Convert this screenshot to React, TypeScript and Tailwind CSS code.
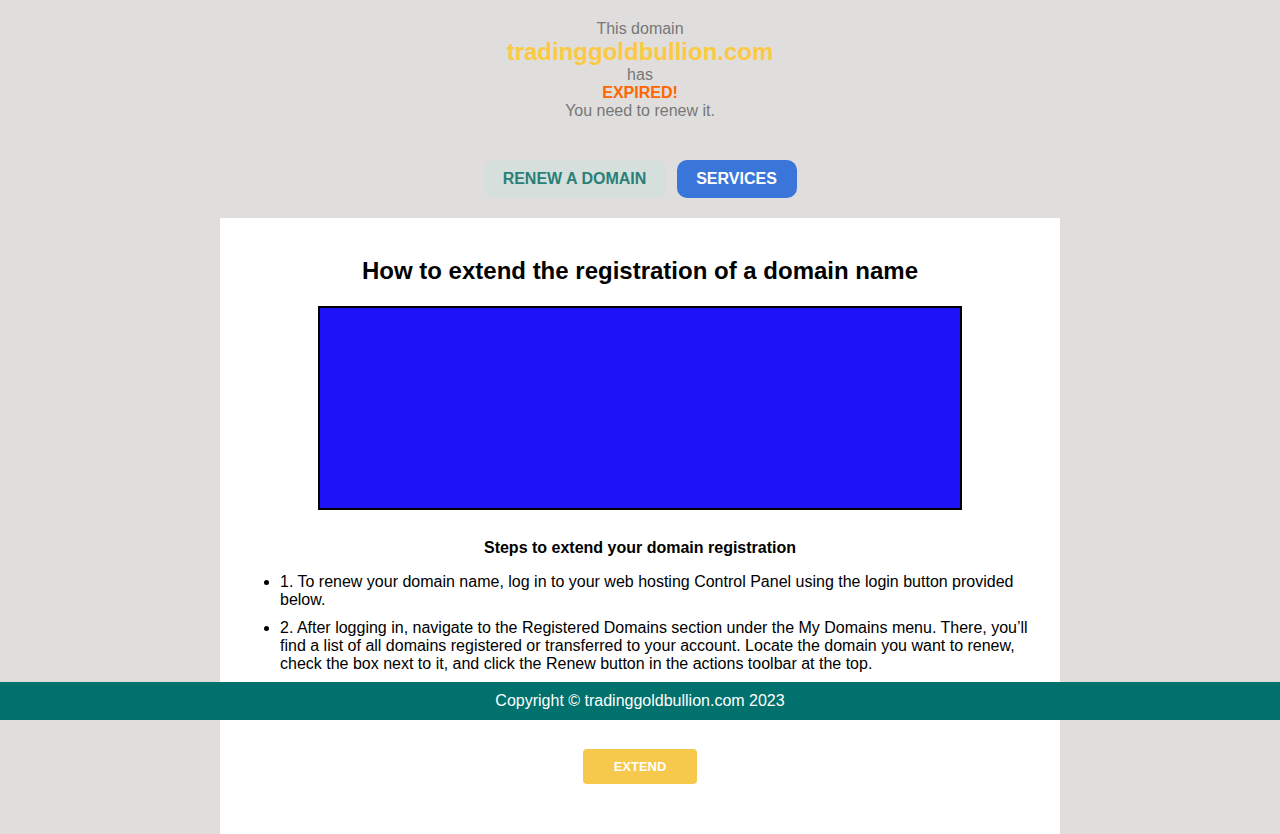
export default function App() {
  return (
    <div className="min-h-screen bg-[#dfdedc] font-['Liberation_Sans',Arial,sans-serif]">
      <div className="pt-[20px] text-center text-[16px] leading-[18px] text-[#777]">
        <p>This domain</p>
        <p className="text-[24px] leading-[28px] font-bold text-[#fdc93f]">tradinggoldbullion.com</p>
        <p>has</p>
        <p className="font-bold text-[#ff6600]">EXPIRED!</p>
        <p>You need to renew it.</p>
      </div>

      <div className="mt-[40px] flex justify-center gap-[11px]">
        <button className="h-[38px] w-[182px] rounded-[10px] bg-[#d5dfdb] text-[16px] font-bold text-[#2a7f78]">
          RENEW A DOMAIN
        </button>
        <button className="h-[38px] w-[120px] rounded-[10px] bg-[#3a75d9] text-[16px] font-bold text-white">
          SERVICES
        </button>
      </div>

      <div className="mx-auto mt-[20px] w-[840px] bg-white px-[20px] pt-[39px] pb-[80px] text-black">
        <h1 className="text-center text-[24px] leading-[28px] font-bold">
          How to extend the registration of a domain name
        </h1>
        <div className="mx-auto mt-[21px] h-[204px] w-[644px] border-2 border-black bg-[#1e12f6]" />

        <h2 className="mt-[29px] text-center text-[16px] leading-[18px] font-bold">
          Steps to extend your domain registration
        </h2>
        <ul className="mt-[16px] list-disc pl-[40px] text-[16px] leading-[18px]">
          <li className="mb-[10px]">
            1. To renew your domain name, log in to your web hosting Control Panel using the login button provided
            below.
          </li>
          <li className="mb-[10px]">
            2. After logging in, navigate to the Registered Domains section under the My Domains menu. There, you’ll
            find a list of all domains registered or transferred to your account. Locate the domain you want to renew,
            check the box next to it, and click the Renew button in the actions toolbar at the top.
          </li>
        </ul>

        <div className="mt-[76px] flex justify-center">
          <button className="h-[35px] w-[114px] rounded-[4px] bg-[#f6c94d] text-[13px] font-bold text-white">
            EXTEND
          </button>
        </div>
      </div>

      <footer className="fixed top-[682px] left-0 right-0 h-[38px] bg-[#00716d] text-center text-[16px] leading-[38px] text-white">
        Copyright © tradinggoldbullion.com 2023
      </footer>
    </div>
  );
}
